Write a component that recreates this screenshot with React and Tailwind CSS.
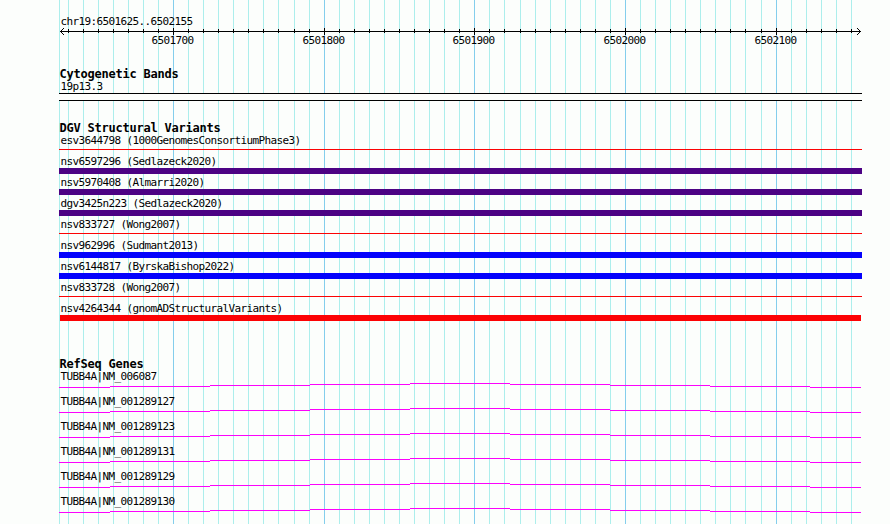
import React from 'react';

const MINOR = [
  59, 68, 83, 98, 113, 128, 143, 158, 188, 203, 218, 233, 248, 263, 278, 294, 309,
  339, 354, 369, 384, 399, 414, 429, 444, 459, 489, 504, 520, 535, 550, 565, 580,
  595, 610, 640, 655, 670, 685, 700, 715, 730, 745, 761, 791, 806, 821, 836, 851,
];
const MAJOR = [173, 324, 474, 625, 776];

const variants = [
  { name: 'esv3644798 (1000GenomesConsortiumPhase3)', bar: 'mt-[2px] h-px w-[803px] bg-[#fc0204]' },
  { name: 'nsv6597296 (Sedlazeck2020)', bar: 'h-1.5 w-[803px] bg-[#4c0284]' },
  { name: 'nsv5970408 (Almarri2020)', bar: 'h-1.5 w-[803px] bg-[#4c0284]' },
  { name: 'dgv3425n223 (Sedlazeck2020)', bar: 'h-1.5 w-[803px] bg-[#4c0284]' },
  { name: 'nsv833727 (Wong2007)', bar: 'mt-[2px] h-px w-[803px] bg-[#fc0204]' },
  { name: 'nsv962996 (Sudmant2013)', bar: 'h-1.5 w-[803px] bg-[#0402fc]' },
  { name: 'nsv6144817 (ByrskaBishop2022)', bar: 'h-1.5 w-[803px] bg-[#0402fc]' },
  { name: 'nsv833728 (Wong2007)', bar: 'mt-[2px] h-px w-[803px] bg-[#fc0204]' },
  { name: 'nsv4264344 (gnomADStructuralVariants)', bar: 'ml-px h-1.5 w-[801px] bg-[#fc0204]' },
];

const genes = [
  'TUBB4A|NM_006087',
  'TUBB4A|NM_001289127',
  'TUBB4A|NM_001289123',
  'TUBB4A|NM_001289131',
  'TUBB4A|NM_001289129',
  'TUBB4A|NM_001289130',
];

// [x, y, width] of each step of the intron line
const STEPS = [
  [0, 4, 51], [51, 3, 100], [151, 2, 100], [251, 1, 100], [351, 0, 100],
  [451, 1, 100], [551, 2, 100], [651, 3, 100], [751, 4, 51],
];

function Title({ children }) {
  return (
    <h2 className="h-[13px] pl-[0.5px] whitespace-pre text-[12px] leading-[14px] font-bold tracking-[-0.224px]">
      {children}
    </h2>
  );
}

function Label({ children }) {
  return (
    <div className="h-[13px] pl-[1.5px] whitespace-pre text-[11px] leading-[13px] tracking-[-0.623px]">
      {children}
    </div>
  );
}

function Grid() {
  return (
    <svg className="absolute inset-0" width="890" height="524" shapeRendering="crispEdges">
      {MINOR.map((x) => (
        <rect key={x} x={x} y="0" width="1" height="524" fill="#aceeec" />
      ))}
      {MAJOR.map((x) => (
        <rect key={x} x={x} y="0" width="1" height="524" fill="#84ceec" />
      ))}
    </svg>
  );
}

function Ruler() {
  return (
    <svg className="block h-1.5 overflow-visible" width="803" viewBox="59 28 803 6" shapeRendering="crispEdges">
      <rect x="60" y="31" width="801" height="1" />
      {MINOR.slice(1).map((x) => (
        <rect key={x} x={x} y="29" width="1" height="4" />
      ))}
      {MAJOR.map((x) => (
        <rect key={x} x={x} y="28" width="1" height="7" />
      ))}
      {[1, 2, 3].map((i) => (
        <g key={i}>
          <rect x={60 + i} y={31 - i} width="1" height="1" />
          <rect x={60 + i} y={31 + i} width="1" height="1" />
          <rect x={860 - i} y={31 - i} width="1" height="1" />
          <rect x={860 - i} y={31 + i} width="1" height="1" />
        </g>
      ))}
    </svg>
  );
}

function Gene({ name }) {
  return (
    <div className="h-[25px]">
      <Label>{name}</Label>
      <svg className="block" width="803" height="5" shapeRendering="crispEdges">
        {STEPS.map(([x, y, w]) => (
          <rect key={x} x={x} y={y} width={w} height="1" fill="#fc02fc" />
        ))}
      </svg>
    </div>
  );
}

export default function App() {
  return (
    <div className="relative h-[524px] w-[890px] overflow-hidden bg-[#fcfefc] font-['DejaVu_Sans_Mono',monospace] text-black">
      <Grid />
      <main className="relative flex flex-col pt-[15px] pl-[59px]">
        <section>
          <Label>chr19:6501625..6502155</Label>
          <Ruler />
          <div className="flex pl-[91px]">
            <div className="w-[151px] shrink-0"><Label>6501700</Label></div>
            <div className="w-[150px] shrink-0"><Label>6501800</Label></div>
            <div className="w-[151px] shrink-0"><Label>6501900</Label></div>
            <div className="w-[151px] shrink-0"><Label>6502000</Label></div>
            <div><Label>6502100</Label></div>
          </div>
        </section>

        <section className="mt-5">
          <Title>Cytogenetic Bands</Title>
          <Label>19p13.3</Label>
          <div className="h-2 w-[803px] border-y border-black bg-[#fcfefc]" />
        </section>

        <section className="mt-5">
          <Title>DGV Structural Variants</Title>
          {variants.map((v) => (
            <div key={v.name} className="flex h-[21px] flex-col">
              <Label>{v.name}</Label>
              <div className={v.bar} />
            </div>
          ))}
        </section>

        <section className="mt-[34px]">
          <Title>RefSeq Genes</Title>
          {genes.map((name) => (
            <Gene key={name} name={name} />
          ))}
        </section>
      </main>
    </div>
  );
}
